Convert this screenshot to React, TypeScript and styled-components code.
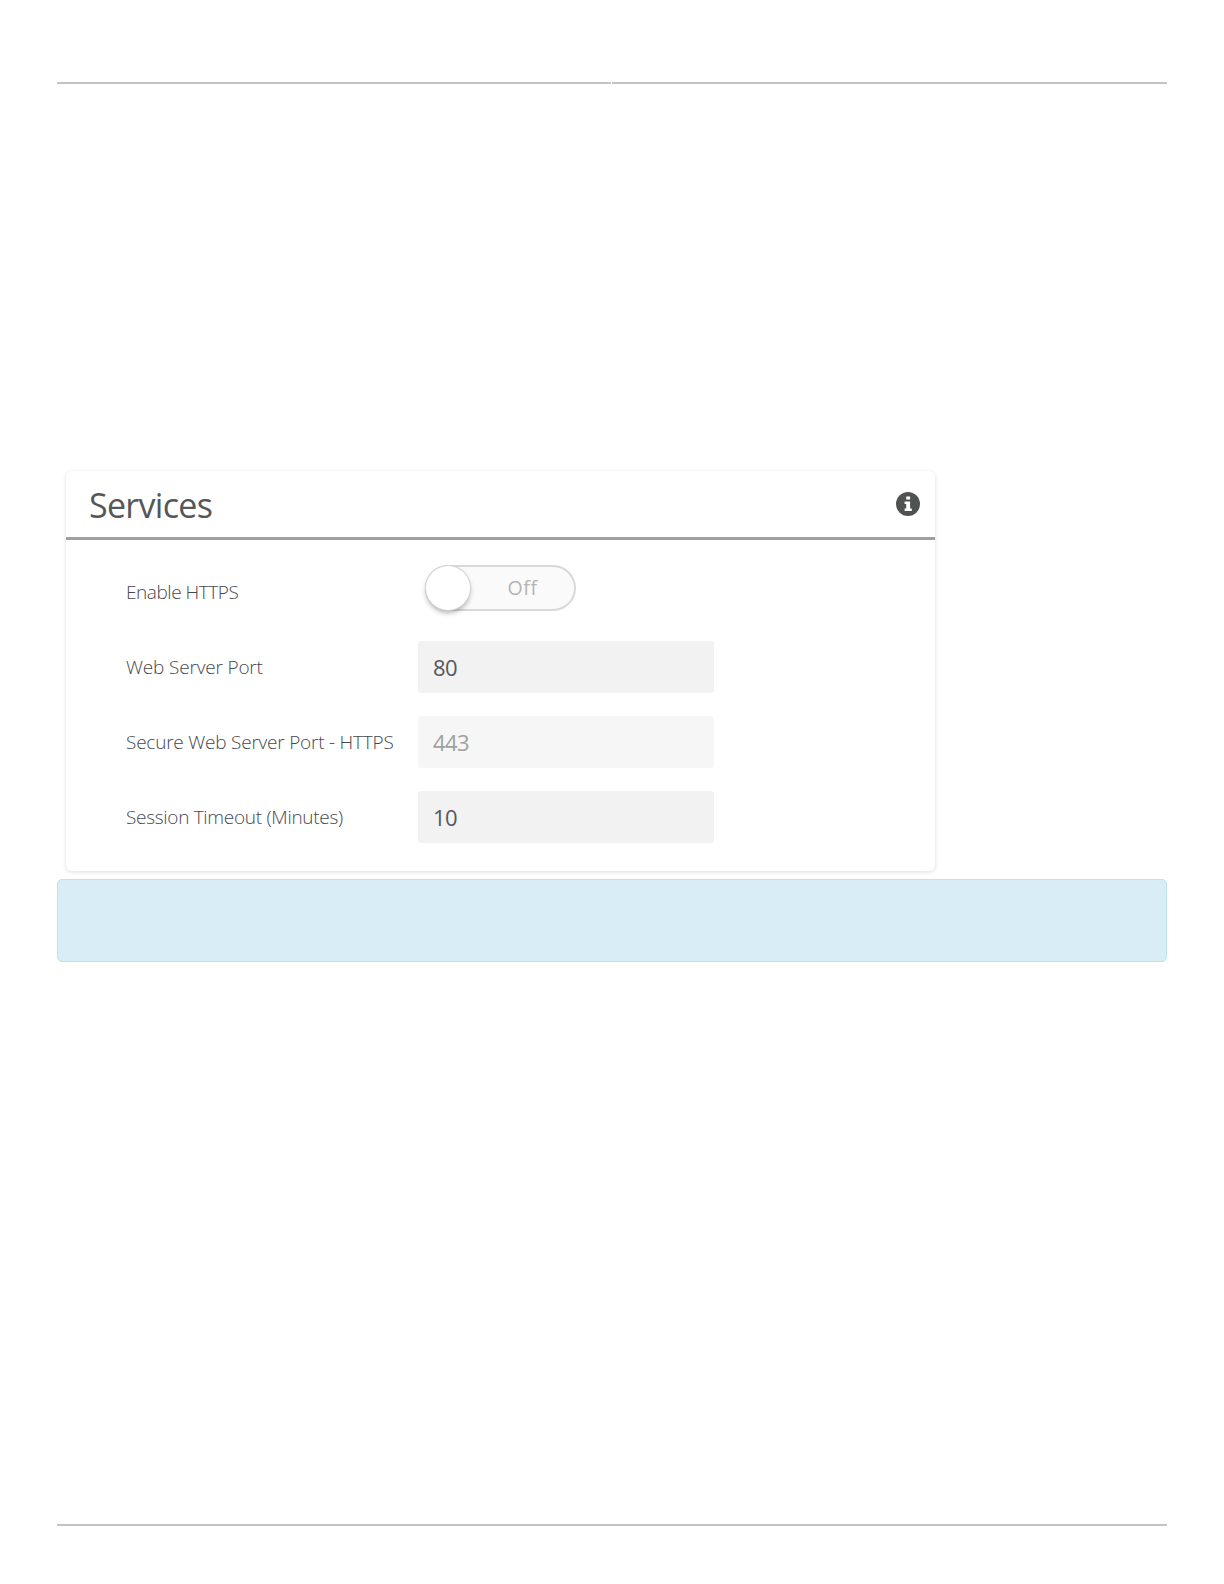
import React, { useState } from 'react';
import styled, { createGlobalStyle } from 'styled-components';

interface Field {
  id: string,
  label: string,
  value: string,
  tracking: number,
  disabled?: boolean
}

const fields: Field[] = [
  { id: 'webPort', label: 'Web Server Port', value: '80', tracking: -0.17 },
  { id: 'securePort', label: 'Secure Web Server Port - HTTPS', value: '443', tracking: -0.22, disabled: true },
  { id: 'timeout', label: 'Session Timeout (Minutes)', value: '10', tracking: -0.3 },
];

const App: React.FC = () => {
  const [isHttps, setIsHttps] = useState<boolean>(false);

  return (
    <>
      <GlobalStyle />
      <Page>
        <Header>
          <Rule />
          <Rule />
        </Header>
        <Content>
          <Card>
            <CardHeader>
              <Title>Services</Title>
              <InfoIcon viewBox="0 0 24 24" aria-label="Info">
                <circle cx="12" cy="12" r="12" fill="#505252" />
                <path d="M10.2 4.6h3.9v3h-3.9zM8.6 9.4h5.5v7h1.7v2.6H8.6v-2.6h1.6V12H8.6z" fill="#fff" />
              </InfoIcon>
            </CardHeader>
            <SwitchRow>
              <Label htmlFor="https" $tracking={-0.45}>Enable HTTPS</Label>
              <Toggle id="https" type="button" role="switch" aria-checked={isHttps} onClick={() => setIsHttps(!isHttps)}>
                <Knob $on={isHttps} />
                <State>{isHttps ? 'On' : 'Off'}</State>
              </Toggle>
            </SwitchRow>
            {fields.map((field) => (
              <Row key={field.id}>
                <Label htmlFor={field.id} $tracking={field.tracking}>{field.label}</Label>
                <Input id={field.id} defaultValue={field.value} disabled={field.disabled && !isHttps} />
              </Row>
            ))}
          </Card>
          <Alert />
        </Content>
        <Rule />
      </Page>
    </>
  );
};

const GlobalStyle = createGlobalStyle`
  body {
    margin: 0;
    background: #fff;
  }

  * {
    box-sizing: border-box;
  }
`
const Page = styled.div`
  width: 1224px;
  height: 1584px;
  padding: 82px 57px 58px;
  display: flex;
  flex-direction: column;
  font-family: 'Open Sans', 'Noto Sans', sans-serif;
`
const Header = styled.header`
  display: grid;
  grid-template-columns: 554px 1fr;
  column-gap: 1px;
`
const Rule = styled.div`
  height: 2px;
  background: #c4c4c4;
`
const Content = styled.main`
  flex: 1;
  padding-top: 387px;
`
const Card = styled.section`
  width: 869px;
  height: 400px;
  margin-left: 9px;
  background: #fff;
  border-radius: 6px;
  box-shadow: 0 1px 4px rgba(0, 0, 0, 0.14);
`
const CardHeader = styled.div`
  height: 69px;
  padding: 0 15px 0 23px;
  display: flex;
  align-items: center;
  justify-content: space-between;
  border-bottom: 3px solid #a0a0a0;
`
const Title = styled.h1`
  margin: 1px 0 0;
  font-size: 34px;
  font-weight: 400;
  line-height: 46px;
  letter-spacing: -0.7px;
  color: #555759;
`
const InfoIcon = styled.svg`
  width: 24px;
  height: 24px;
`
const Row = styled.div`
  height: 52px;
  margin-bottom: 23px;
  padding-left: 60px;
  display: grid;
  grid-template-columns: 292px 296px;
  align-items: center;
`
const SwitchRow = styled(Row)`
  margin: 25px 0 24px;
`
const Label = styled.label<{ $tracking: number }>`
  font-size: 19px;
  font-weight: 300;
  line-height: 26px;
  letter-spacing: ${(props) => props.$tracking}px;
  white-space: nowrap;
  color: #46484e;
`
const Input = styled.input`
  width: 296px;
  height: 52px;
  padding: 0 15px;
  border: none;
  border-radius: 3px;
  outline: none;
  background: #f2f2f2;
  font-family: inherit;
  font-size: 22px;
  letter-spacing: -0.6px;
  color: #55575b;

  &:disabled {
    background: #f6f6f6;
    color: #a0a0a0;
  }
`
const Toggle = styled.button`
  width: 151px;
  height: 46px;
  margin: 0 0 8px 7px;
  padding: 0;
  display: flex;
  align-items: center;
  border: 2px solid #d8d8d8;
  border-radius: 23px;
  background: #fafafa;
  font-family: inherit;
`
const Knob = styled.span<{ $on: boolean }>`
  order: ${(props) => props.$on ? 1 : 0};
  width: 44px;
  height: 44px;
  margin: 0 -1px;
  flex-shrink: 0;
  border-radius: 50%;
  background: #fff;
  box-shadow: 0 0 0 1px #d4d4d4, 0 3px 5px rgba(0, 0, 0, 0.3);
`
const State = styled.span`
  flex: 1;
  padding-left: 2px;
  font-size: 19.5px;
  line-height: 26px;
  letter-spacing: 0.6px;
  color: #b4b4b4;
`
const Alert = styled.div`
  height: 83px;
  margin-top: 8px;
  border: 1px solid #bce4ea;
  border-radius: 5px;
  background: #d9edf6;
`
export default App;
